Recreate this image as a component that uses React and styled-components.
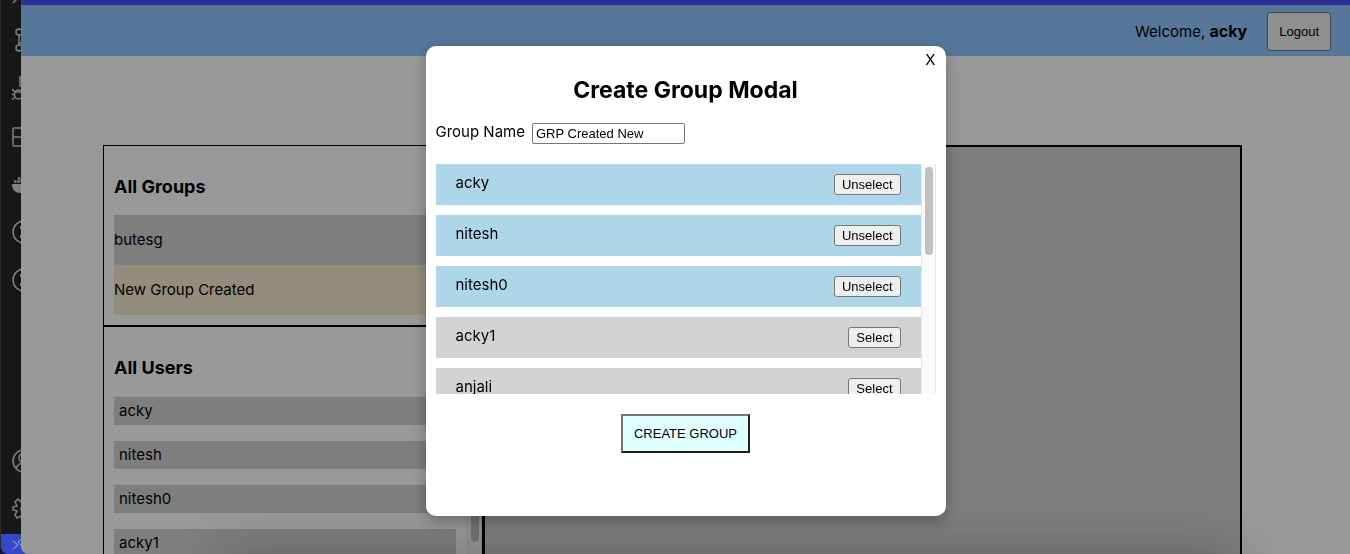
import React, { useState } from "react";
import styled, { createGlobalStyle } from "styled-components";

const GlobalStyle = createGlobalStyle`
  * { box-sizing: border-box; }
  body {
    margin: 0;
    background: #20122e;
    color: #000;
    font: 15px/20px Inter, "Liberation Sans", sans-serif;
    overflow: hidden;
  }
  button, input { font: 13px/15px "Liberation Sans", Arial, sans-serif; color: #000; }
  h2, h3, ul { margin: 0; padding: 0; }
  ul { list-style: none; }
`;

const Desktop = styled.div`
  display: flex;
  height: 100vh;
`;

const ActivityBar = styled.aside`
  display: flex;
  flex-direction: column;
  flex: none;
  width: 29px;
  margin-right: -8px;
  background: #171717;
  border-left: 1px solid #2d2d2d;
  border-bottom-left-radius: 8px;
  overflow: hidden;
`;

const IconStack = styled.div`
  display: flex;
  flex-direction: column;
  gap: 24px;
  padding-left: 11px;
  margin-top: ${(p) => (p.$end ? "auto" : "-20px")};
  padding-bottom: ${(p) => (p.$end ? "13px" : "0")};
`;

const Glyph = styled.svg`
  display: block;
  flex: none;
  width: 24px;
  height: 24px;
  fill: none;
  stroke: #808080;
  stroke-width: 1.5;
`;

const Remote = styled.div`
  display: flex;
  flex: none;
  height: 20px;
  padding-left: 11px;
  background: #3549c8;
`;

const RemoteGlyph = styled.svg`
  flex: none;
  width: 20px;
  height: 20px;
  fill: none;
  stroke: #a9b0e0;
`;

const Browser = styled.div`
  position: relative;
  display: flex;
  flex-direction: column;
  flex: 1;
  min-width: 0;
  background: #fff;
  border-bottom-left-radius: 8px;
  overflow: hidden;
`;

const Header = styled.header`
  display: flex;
  flex: none;
  align-items: center;
  justify-content: flex-end;
  gap: 20px;
  height: 56px;
  padding: 2px 19px 0 20px;
  border-top: 5px solid #4c50ff;
  background: #8fc6ff;
`;

const UserName = styled.strong`
  font-size: 16px;
`;

const LogoutButton = styled.button`
  padding: 11px;
  background: #efefef;
  border: 1px solid #767676;
  border-radius: 3px;
`;

const Board = styled.main`
  display: flex;
  flex: 1;
  min-height: 0;
  margin: 89px 108px 0 82px;
`;

const Lists = styled.div`
  display: flex;
  flex-direction: column;
  flex: 1;
  min-width: 0;
  border: 1px solid #000;
  border-bottom: 0;
`;

const Chat = styled.section`
  flex: 2;
  background: #d3d3d3;
  border: 2px solid #000;
  border-bottom: 0;
`;

const Panel = styled.section`
  display: flex;
  flex-direction: column;
  gap: ${(p) => (p.$scroll ? "19px" : "18px")};
  padding: ${(p) => (p.$scroll ? "31px 0 0 10px" : "31px 10px 10px")};
  min-height: 0;
  flex: ${(p) => (p.$scroll ? "1" : "none")};
  border-bottom: ${(p) => (p.$scroll ? "0" : "2px solid #000")};
`;

const PanelTitle = styled.h3`
  font-size: 18px;
  line-height: 20px;
`;

const GroupItem = styled.li`
  padding: 15px 0;
  background: ${(p) => (p.$active ? "#f8ecce" : "#d3d3d3")};
`;

const ScrollArea = styled.div`
  display: flex;
  flex: 1;
  min-height: 0;
  overflow: hidden;
`;

const Users = styled.ul`
  display: flex;
  flex-direction: column;
  flex: 1;
  gap: 16px;
  padding-right: 11px;
`;

const UserItem = styled.li`
  flex: none;
  padding: 4px 5px;
  background: #d3d3d3;
`;

const Track = styled.div`
  flex: none;
  width: 15px;
  padding: 3px;
  background: #fafafa;
  border: solid #e8e8e8;
  border-width: 0 1px;
`;

const Thumb = styled.div`
  width: 8px;
  height: ${(p) => (p.$long ? "142px" : "88px")};
  border-radius: 4px;
  background: #c1c1c1;
`;

const Overlay = styled.div`
  position: fixed;
  inset: 0 0 0 21px;
  display: flex;
  justify-content: center;
  align-items: flex-start;
  padding-top: 46px;
  background: rgba(0, 0, 0, 0.4);
  border-bottom-left-radius: 8px;
  overflow: hidden;

  &::before {
    content: "";
    position: absolute;
    left: 200px;
    right: 110px;
    top: 100%;
    height: 60px;
    box-shadow: 0 0 60px rgba(0, 0, 0, 0.25);
  }
`;

const Modal = styled.form`
  position: relative;
  display: flex;
  flex-direction: column;
  width: 520px;
  max-width: 100%;
  height: 470px;
  padding: 4px 10px 10px;
  background: #fff;
  border-radius: 10px;
  box-shadow: 0 5px 15px rgba(0, 0, 0, 0.3);
`;

const CloseButton = styled.button`
  align-self: flex-end;
  padding: 0;
  border: 0;
  background: none;
  font: 15px/20px Inter, sans-serif;
`;

const ModalTitle = styled.h2`
  padding: 4px 0 17px;
  font-size: 23px;
  line-height: 32px;
  text-align: center;
`;

const Field = styled.div`
  display: flex;
  align-items: flex-start;
  gap: 7px;
  padding-bottom: 20px;
  line-height: 18px;
`;

const NameInput = styled.input`
  width: 153px;
  height: 21px;
  padding: 1px 3px;
  border: 1px solid #767676;
  border-radius: 2px;
`;

const MemberArea = styled(ScrollArea)`
  flex: none;
  height: 230px;
`;

const Members = styled.ul`
  display: flex;
  flex-direction: column;
  flex: 1;
  gap: 10px;
`;

const Member = styled.li`
  display: flex;
  flex: none;
  align-items: flex-start;
  justify-content: space-between;
  padding: 10px 20px;
  line-height: 18px;
  background: ${(p) => (p.$selected ? "#add6e8" : "#d3d3d3")};
`;

const ToggleButton = styled.button`
  padding: 2px 7px;
  background: #efefef;
  border: 1px solid #767676;
  border-radius: 3px;
`;

const CreateButton = styled.button`
  align-self: center;
  margin-top: 20px;
  padding: 10px 11px;
  background: #e0ffff;
  border: 2px solid;
  border-color: #767676 #212121 #212121 #767676;
`;

const users = ["acky", "nitesh", "nitesh0", "acky1", "anjali"];

export default function App() {
  const [name, setName] = useState("GRP Created New");
  const [selected, setSelected] = useState(["acky", "nitesh", "nitesh0"]);
  const toggle = (user) =>
    setSelected((s) => (s.includes(user) ? s.filter((u) => u !== user) : [...s, user]));

  return (
    <>
      <GlobalStyle />
      <Desktop>
        <ActivityBar>
          <IconStack>
            <Glyph viewBox="0 0 24 24"><circle cx="14" cy="9" r="7" /><path d="M9 14L1 23" /></Glyph>
            <Glyph viewBox="0 0 24 24"><circle cx="7" cy="4" r="3" /><circle cx="7" cy="20" r="3" /><circle cx="18" cy="8" r="3" /><path d="M7 7v10M18 11c0 4-5 4-11 4" /></Glyph>
            <Glyph viewBox="0 0 24 24"><path d="M8 11V1l14 8-10 7M2.500 18a4 4 0 0 1 8 0v1a4 4 0 0 1-8 0zM3 16h7M0 18.500h2.500M0 13l3 3M0 23.500l3-2M10.500 18.500h2.500M10 21.500l3 2" /></Glyph>
            <Glyph viewBox="0 0 24 24"><rect x="1" y="4" width="18" height="18" rx="1" /><path d="M1 13h18M10 4v18" /></Glyph>
            <Glyph viewBox="0 0 24 24"><path d="M0 12h23c-3 2-4 9-14 9C3 21 0 18 0 12z" fill="#808080" stroke="none" /><path d="M2 9.500h14M6 6.500h10" strokeWidth="2.500" strokeDasharray="2.500 .7" /></Glyph>
            <Glyph viewBox="0 0 24 24"><circle cx="12" cy="12" r="11" /><path d="M9 6v3M9 15v3" strokeWidth="2" /></Glyph>
            <Glyph viewBox="0 0 24 24"><circle cx="12" cy="12" r="11" /><path d="M9 6v3M9 15v3" strokeWidth="2" /></Glyph>
          </IconStack>
          <IconStack $end>
            <Glyph viewBox="0 0 24 24"><circle cx="12" cy="12" r="11" /><circle cx="12" cy="9" r="5" /><path d="M4 20c1-4 4-6 8-6s7 2 8 6" /></Glyph>
            <Glyph viewBox="0 0 24 24"><path d="M9 5l1-4h4l1 4 4-2 3 3-3 4 4 1v3l-4 1 2 4-3 3-3-3-1 4h-4l-1-4-4 2-2-3 2-4-4-1v-3l4-1-2-4 3-3z" /><circle cx="12" cy="12" r="3" /></Glyph>
          </IconStack>
          <Remote>
            <RemoteGlyph viewBox="0 0 20 20"><path d="M1 7l5 4-5 4M11 4L6 8l5 5" /></RemoteGlyph>
          </Remote>
        </ActivityBar>

        <Browser>
          <Header>
            <span>Welcome, <UserName>acky</UserName></span>
            <LogoutButton type="button">Logout</LogoutButton>
          </Header>
          <Board>
            <Lists>
              <Panel>
                <PanelTitle>All Groups</PanelTitle>
                <ul>
                  <GroupItem>butesg</GroupItem>
                  <GroupItem $active>New Group Created</GroupItem>
                </ul>
              </Panel>
              <Panel $scroll>
                <PanelTitle>All Users</PanelTitle>
                <ScrollArea>
                  <Users>
                    {users.map((u) => <UserItem key={u}>{u}</UserItem>)}
                  </Users>
                  <Track><Thumb $long /></Track>
                </ScrollArea>
              </Panel>
            </Lists>
            <Chat />
          </Board>
        </Browser>
      </Desktop>

      <Overlay>
        <Modal role="dialog" aria-labelledby="modal-title" onSubmit={(e) => e.preventDefault()}>
          <CloseButton type="button">X</CloseButton>
          <ModalTitle id="modal-title">Create Group Modal</ModalTitle>
          <Field>
            <label htmlFor="group-name">Group Name</label>
            <NameInput id="group-name" value={name} onChange={(e) => setName(e.target.value)} />
          </Field>
          <MemberArea>
            <Members>
              {users.map((u) => (
                <Member key={u} $selected={selected.includes(u)}>
                  <span>{u}</span>
                  <ToggleButton type="button" onClick={() => toggle(u)}>
                    {selected.includes(u) ? "Unselect" : "Select"}
                  </ToggleButton>
                </Member>
              ))}
            </Members>
            <Track><Thumb /></Track>
          </MemberArea>
          <CreateButton type="submit">CREATE GROUP</CreateButton>
        </Modal>
      </Overlay>
    </>
  );
}
